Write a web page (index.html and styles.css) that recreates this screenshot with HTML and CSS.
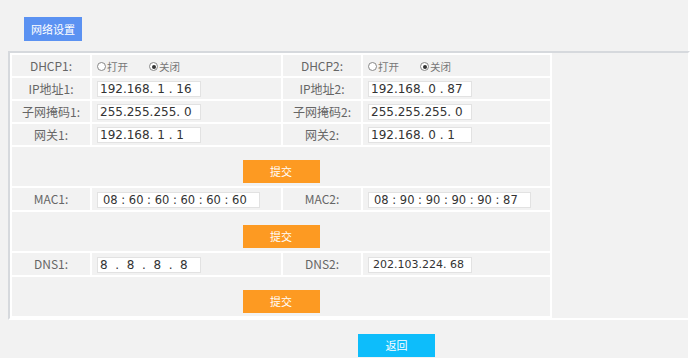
FILE: index.html
```html
<!DOCTYPE html>
<html lang="zh-CN">
<head>
<meta charset="utf-8">
<title>网络设置</title>
<link rel="stylesheet" href="styles.css">
</head>
<body>
<div class="page">
  <div class="tabs"><button class="tab-btn">网络设置</button></div>
  <div class="panel">
    <table class="grid">
      <colgroup><col class="c-lab"><col class="c-val"><col class="c-lab"><col class="c-val2"></colgroup>
      <tr class="row">
        <td class="lab">DHCP1:</td>
        <td class="val"><label class="radio"><span class="dot"></span>打开</label><label class="radio"><span class="dot on"></span>关闭</label></td>
        <td class="lab">DHCP2:</td>
        <td class="val"><label class="radio"><span class="dot"></span>打开</label><label class="radio"><span class="dot on"></span>关闭</label></td>
      </tr>
      <tr class="row">
        <td class="lab">IP地址1:</td>
        <td class="val"><span class="field">192.168. 1 . 16</span></td>
        <td class="lab">IP地址2:</td>
        <td class="val"><span class="field">192.168. 0 . 87</span></td>
      </tr>
      <tr class="row">
        <td class="lab">子网掩码1:</td>
        <td class="val"><span class="field">255.255.255. 0</span></td>
        <td class="lab">子网掩码2:</td>
        <td class="val"><span class="field">255.255.255. 0</span></td>
      </tr>
      <tr class="row">
        <td class="lab">网关1:</td>
        <td class="val"><span class="field">192.168. 1 . 1</span></td>
        <td class="lab">网关2:</td>
        <td class="val"><span class="field">192.168. 0 . 1</span></td>
      </tr>
      <tr class="act"><td colspan="4"><button class="btn-submit">提交</button></td></tr>
      <tr class="row row-mac">
        <td class="lab">MAC1:</td>
        <td class="val"><span class="field mac">08 : 60 : 60 : 60 : 60 : 60</span></td>
        <td class="lab">MAC2:</td>
        <td class="val"><span class="field mac">08 : 90 : 90 : 90 : 90 : 87</span></td>
      </tr>
      <tr class="act"><td colspan="4"><button class="btn-submit">提交</button></td></tr>
      <tr class="row row-mac">
        <td class="lab">DNS1:</td>
        <td class="val"><span class="field">8  .  8  .  8  .  8</span></td>
        <td class="lab">DNS2:</td>
        <td class="val"><span class="field small">202.103.224. 68</span></td>
      </tr>
      <tr class="act"><td colspan="4"><button class="btn-submit">提交</button></td></tr>
    </table>
  </div>
  <div class="footer"><button class="btn-back">返回</button></div>
</div>
</body>
</html>
```

FILE: styles.css
```css
html, body {
  margin: 0;
  padding: 0;
  background: #ffffff;
}
body {
  font-family: "Noto Sans CJK SC", "Noto Sans", sans-serif;
}
.page {
  width: 688px;
  height: 358px;
  background: #f2f2f2;
  padding-top: 17px;
  box-sizing: border-box;
}
.tabs {
  padding-left: 24px;
  height: 24px;
}
.tab-btn {
  width: 58px;
  height: 24px;
  border: none;
  margin: 0;
  padding: 0;
  background: #5b92f2;
  color: #ffffff;
  font-family: "Noto Sans CJK SC", sans-serif;
  font-size: 11px;
  display: block;
}
.panel {
  margin-top: 10px;
  margin-left: 8px;
  width: 682px;
  box-sizing: border-box;
  border: 2px solid;
  border-color: #d6d9dd #ffffff #ffffff #d6d9dd;
}
.grid {
  border-collapse: separate;
  border-spacing: 2px;
  background: #ffffff;
  table-layout: fixed;
  width: 542px;
  line-height: 14px;
}
.c-lab { width: 78px; }
.c-val { width: 189px; }
.c-val2 { width: 187px; }
.grid td {
  background: #f2f2f2;
  padding: 0;
  vertical-align: middle;
}
.row td { height: 21px; }
.row-mac td { height: 22px; }
.lab {
  text-align: center;
  font-size: 12px;
  color: #666666;
  white-space: nowrap;
}
.grid td.val {
  padding-left: 5px;
}
.field {
  display: inline-block;
  width: 104px;
  height: 16px;
  box-sizing: border-box;
  background: #ffffff;
  border: 1px solid #e2e2e2;
  padding: 0 0 0 2px;
  font-family: "DejaVu Sans", sans-serif;
  font-size: 12px;
  line-height: 14px;
  color: #333333;
  white-space: pre;
  vertical-align: middle;
  overflow: hidden;
}
.field.small {
  font-size: 11px;
  padding-left: 4px;
}
.field.mac {
  width: 163px;
  padding-left: 5px;
  font-size: 11.5px;
}
.radio {
  display: inline-flex;
  align-items: center;
  font-size: 10.5px;
  line-height: 14px;
  color: #777777;
  margin-right: 21px;
  vertical-align: middle;
}
.dot {
  width: 9px;
  height: 9px;
  box-sizing: border-box;
  border: 1px solid #888888;
  border-radius: 50%;
  background: #ffffff;
  margin-right: 1px;
  position: relative;
}
.dot.on::after {
  content: "";
  position: absolute;
  left: 1.5px;
  top: 1.5px;
  width: 4px;
  height: 4px;
  border-radius: 50%;
  background: #333333;
}
.grid .act td {
  height: 26px;
  text-align: center;
  vertical-align: top;
  padding-top: 13px;
}
.btn-submit {
  width: 77px;
  height: 23px;
  border: none;
  margin: 0;
  padding: 0;
  background: #fd9a22;
  color: #ffffff;
  font-family: "Noto Sans CJK SC", sans-serif;
  font-size: 11px;
  line-height: 23px;
  display: block;
  margin: 0 auto;
}
.footer {
  padding-top: 14px;
  padding-left: 358px;
}
.btn-back {
  width: 77px;
  height: 23px;
  border: none;
  margin: 0;
  padding: 0;
  background: #0dbdfb;
  color: #ffffff;
  font-family: "Noto Sans CJK SC", sans-serif;
  font-size: 11px;
  line-height: 23px;
  display: block;
}
```
